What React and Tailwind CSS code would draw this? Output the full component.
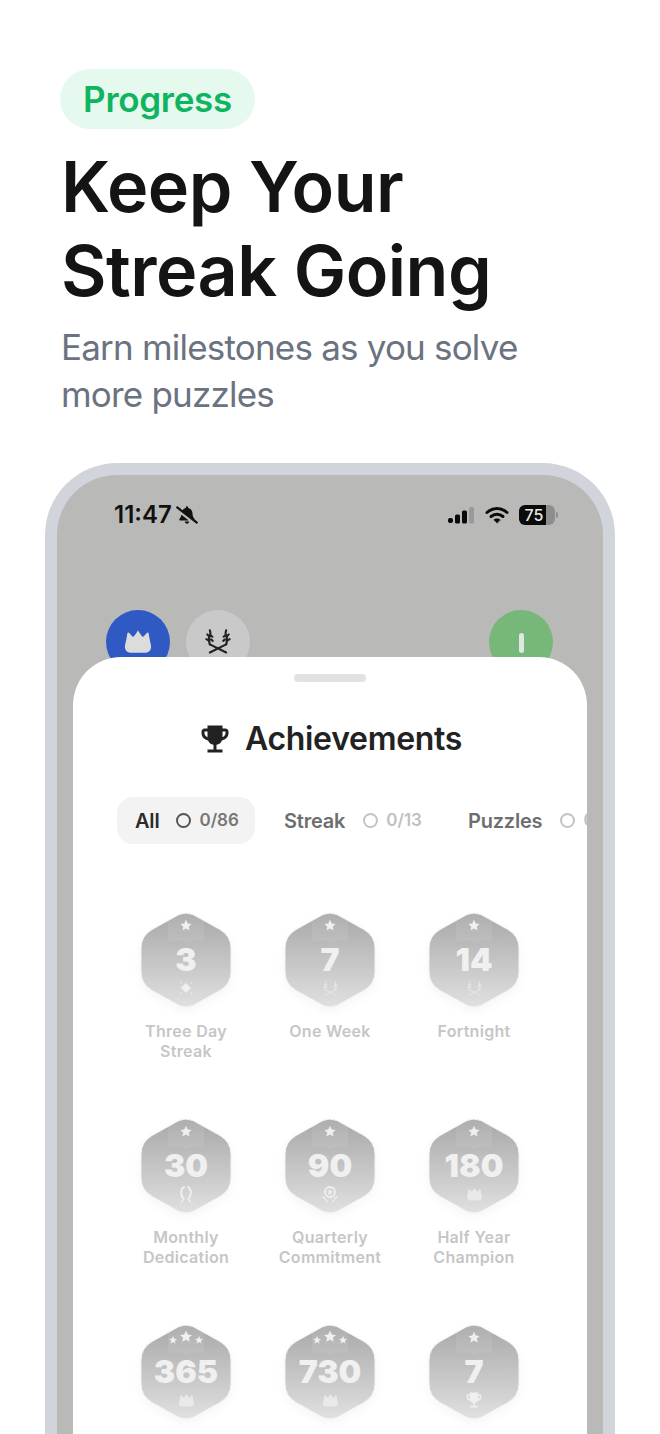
import React from 'react';
import { FaBellSlash } from 'react-icons/fa';
import { MdEmojiEvents } from 'react-icons/md';

const STAR = 'M0-5.2 1.6-1.8 5.2-1.4 2.5 1 3.3 4.6 0 2.8-3.3 4.6-2.5 1-5.2-1.4-1.6-1.8Z';

const Crown = ({ className, fill = '#e9e9e9' }) => (
  <svg viewBox="0 0 28 24" className={className} fill={fill}>
    <path d="M14 1c1.2 2.4 3 5 4.6 6.4 1.2-1 2.4-2.3 3.4-3.6.9-.9 1.8-.7 2 .5.5 3.4 1.200 7 2 10 .9 4-1 7.700-5 7.700H7c-4 0-5.900-3.700-5-7.700.8-3 1.500-6.600 2-10 .2-1.200 1.100-1.400 2-.5 1 1.300 2.200 2.600 3.400 3.600C11 6 12.800 3.400 14 1Z" />
  </svg>
);

const Laurel = ({ className, color = '#efefef', sw = 1.4 }) => (
  <svg viewBox="0 0 24 24" className={className} fill="none" stroke={color} strokeWidth={sw} strokeLinecap="round">
    <path d="M5 21 19 14M19 21 5 14" />
    <path d="M5 14C4 11 4 8 5.500 5M19 14c1-3 1-6-.5-9" />
    <path d="M4.500 11 2 9.500M4.600 7.500 2.800 5.500M5.500 4 5 2M19.500 11 22 9.500M19.400 7.500l1.800-2M18.500 4 19 2M7.500 11 6 9.800M7.200 7.500 6 6.500M16.500 11 18 9.800M16.800 7.500 18 6.500" />
  </svg>
);

const Sparkle = () => (
  <svg viewBox="0 0 20 20" className="h-5 w-5" fill="#efefef" stroke="#efefef" strokeLinecap="round">
    <path d="M10 5.500 14.500 10 10 14.500 5.500 10Z" strokeWidth="1" strokeLinejoin="round" />
    <path d="M4 4 5.500 5.500M16 4 14.500 5.500M4 16 5.500 14.500M16 16 14.500 14.500" strokeWidth="1" />
  </svg>
);

const Wreath = () => (
  <svg viewBox="0 0 20 20" className="h-5 w-5" fill="none" stroke="#efefef" strokeWidth="2" strokeLinecap="round">
    <path d="M8 3C4.500 5 4 11 7.500 15M12 3c3.500 2 4 8 .5 12" />
    <path d="M7 16.500 5.500 18M13 16.500l1.500 1.500" strokeWidth="1.500" />
  </svg>
);

const Rosette = () => (
  <svg viewBox="0 0 20 20" className="h-5 w-5" fill="none" stroke="#efefef" strokeLinecap="round">
    <circle cx="10" cy="8" r="5" strokeWidth="1.800" />
    <path d="M10 5.500 10.800 7.200 12.500 7.500 11.200 8.700 11.600 10.500 10 9.500 8.400 10.500 8.800 8.700 7.500 7.500 9.200 7.200Z" fill="#efefef" strokeWidth=".4" />
    <path d="M3 13 5.500 15M17 13 14.500 15M6 17.500 7 16.500M14 17.500 13 16.500" strokeWidth="1.400" />
  </svg>
);

const icons = {
  sparkle: <Sparkle />,
  laurel: <Laurel className="h-[17px] w-[17px]" sw={1} />,
  wreath: <Wreath />,
  rosette: <Rosette />,
  crown: <Crown className="h-[15px] w-[17px]" />,
  trophy: <MdEmojiEvents className="h-5 w-5 text-[#efefef]" />,
};

const badges = [
  { value: '3', label: 'Three Day Streak', icon: 'sparkle' },
  { value: '7', label: 'One Week', icon: 'laurel' },
  { value: '14', label: 'Fortnight', icon: 'laurel' },
  { value: '30', label: 'Monthly Dedication', icon: 'wreath' },
  { value: '90', label: 'Quarterly Commitment', icon: 'rosette' },
  { value: '180', label: 'Half Year Champion', icon: 'crown' },
  { value: '365', icon: 'crown', stars: 3 },
  { value: '730', icon: 'crown', stars: 3 },
  { value: '7', icon: 'trophy' },
];

const Badge = ({ value, label, icon, stars = 1 }) => (
  <div className="flex flex-col items-center">
    <div className="relative h-[94px] w-[90px]">
      <svg viewBox="0 0 90 94" className="absolute inset-0 h-full w-full overflow-visible drop-shadow-[0_4px_5px_rgba(0,0,0,0.035)]">
        <defs>
          <linearGradient id="hexFill" x1="0" y1="0" x2="0" y2="1">
            <stop offset="0" stopColor="#a8a8a8" />
            <stop offset="1" stopColor="#e0e0e0" />
          </linearGradient>
        </defs>
        <path
          d="M38 1.500Q45-1.500 52 1.500L79 16.500Q90 23 90 35V59Q90 71 79 77.500L52 92.500Q45 95.500 38 92.500L11 77.500Q0 71 0 59V35Q0 23 11 16.500Z"
          fill="url(#hexFill)"
          stroke="#f4f4f4"
          strokeWidth="1"
        />
        <path d="M27 8 38 1.500Q45-1.500 52 1.500L63 8V24Q63 29 58 28 50 26 45 30 40 26 32 28 27 29 27 24Z" fill="#fff" opacity="0.08" />
        {stars === 3 ? (
          <g fill="#efefef">
            <path d={STAR} transform="translate(45 11.500) scale(1.150)" />
            <path d={STAR} transform="translate(32 15) scale(.75)" />
            <path d={STAR} transform="translate(58 15) scale(.75)" />
          </g>
        ) : (
          <path d={STAR} fill="#efefef" transform="translate(45 12.500) scale(1.100)" />
        )}
      </svg>
      <div className="absolute inset-x-0 top-[28px] flex flex-col items-center">
        <span className="text-[32px] leading-[38px] font-black text-[#f0f0f0]">{value}</span>
        <div className="-mt-[1px] flex h-[20px] items-center justify-center">{icons[icon]}</div>
      </div>
    </div>
    {label && (
      <p className="mt-[14px] w-[125px] text-center text-[16px] leading-[20px] font-semibold tracking-[0.3px] text-[#c6c6c6]">{label}</p>
    )}
  </div>
);

const Tab = ({ name, count, active }) => (
  <div className={`flex h-[47px] shrink-0 items-center rounded-[16px] ${active ? 'w-[138px] bg-[#f3f3f3] pl-[18px]' : 'pl-[29px]'}`}>
    <span className={`text-[20px] font-semibold tracking-[-0.2px] ${active ? 'text-[#2b2b2b]' : 'text-[#6e6e6e]'}`}>{name}</span>
    <span className={`h-[15px] w-[15px] shrink-0 rounded-full border-2 ${active ? 'ml-[17px] border-[#555555]' : 'ml-[18px] border-[#c4c4c4]'}`} />
    <span className={`ml-[8px] text-[17px] font-semibold ${active ? 'text-[#777777]' : 'text-[#c0c0c0]'}`}>{count}</span>
  </div>
);

export default function App() {
  return (
    <div className="h-[1434px] w-[660px] overflow-hidden bg-white font-['Inter',sans-serif]">
      <header className="pl-[61px] pt-[69px]">
        <div className="-ml-[1px] flex h-[60px] w-[195px] items-center justify-center rounded-full bg-[#e6f9ef] text-[35px] font-semibold tracking-[-0.3px] text-[#0fb45e]">
          Progress
        </div>
        <h1 className="mt-[16px] text-[70px] leading-[84px] font-semibold tracking-[-0.5px] text-[#141414]">
          Keep Your
          <br />
          Streak Going
        </h1>
        <p className="mt-[11px] text-[35px] leading-[47px] tracking-[-0.8px] text-[#6b7280]">
          Earn milestones as you solve
          <br />
          more puzzles
        </p>
      </header>

      <section className="mx-[45px] mt-[45px] h-[990px] rounded-t-[72px] border-x-[12px] border-t-[12px] border-[#d1d5db] bg-[#b9b9b8] px-[16px]">
        <div className="flex h-[80px] items-center justify-between pl-[41px] pr-[29px]">
          <div className="flex items-center gap-[4px]">
            <span className="text-[24px] font-semibold text-[#111111]">11:47</span>
            <FaBellSlash className="h-[20px] w-[22px] text-[#111111]" />
          </div>
          <div className="flex items-center gap-[10px]">
            <svg viewBox="0 0 28 18" className="h-[18px] w-[28px]">
              <rect x="1" y="12" width="5" height="5" rx="2" fill="#0a0a0a" />
              <rect x="8" y="8.500" width="5" height="9" rx="1.500" fill="#0a0a0a" />
              <rect x="15" y="4.500" width="5" height="13" rx="1.500" fill="#0a0a0a" />
              <rect x="22" y="1" width="5" height="16.500" rx="1.500" fill="#9a9a9a" />
            </svg>
            <svg viewBox="0 0 24 18" className="h-[18px] w-[24px]" fill="none" stroke="#0a0a0a" strokeWidth="3" strokeLinecap="round">
              <path d="M2 6.500C8 1 16 1 22 6.500" />
              <path d="M6 10.500C9.500 7.500 14.500 7.500 18 10.500" />
              <path d="M12 17 8.800 13.800C10.500 12.300 13.500 12.300 15.200 13.800Z" fill="#0a0a0a" strokeWidth="0.500" />
            </svg>
            <div className="flex items-center">
              <div className="flex h-[20px] w-[36px] items-center justify-center overflow-hidden rounded-[6px] bg-[linear-gradient(90deg,#0a0a0a_74%,#8e8e8e_74%)] pr-[6px] text-[16px] font-medium text-[#e8e8e8]">
                75
              </div>
              <span className="ml-[1px] h-[6px] w-[2px] rounded-r-full bg-[#8e8e8e]" />
            </div>
          </div>
        </div>

        <div className="flex h-[102px] items-start justify-between pl-[33px] pr-[34px] pt-[55px]">
          <div className="flex gap-[16px]">
            <div className="flex h-[64px] w-[64px] items-center justify-center rounded-full bg-[#2f5ac4]">
              <Crown className="h-[26px] w-[30px]" fill="#dcdcdc" />
            </div>
            <div className="flex h-[64px] w-[64px] items-center justify-center rounded-full bg-[#c9c9c9]">
              <Laurel className="h-[28px] w-[28px]" color="#222222" sw={1.800} />
            </div>
          </div>
          <div className="flex h-[64px] w-[64px] justify-center rounded-full bg-[#77b87a] pt-[23px]">
            <span className="h-[20px] w-[5px] rounded-full bg-[#dfe9df]" />
          </div>
        </div>

        <div className="relative h-[900px] overflow-hidden rounded-t-[48px] bg-white">
          <div className="mx-auto mt-[17px] h-[8px] w-[72px] rounded-full bg-[#e2e2e2]" />
          <div className="mt-[38px] flex items-center justify-center pr-[1px]">
            <MdEmojiEvents className="mr-[12px] h-[36px] w-[36px] text-[#222222]" />
            <h2 className="text-[32px] leading-[38px] font-semibold tracking-[-0.3px] text-[#222222]">Achievements</h2>
          </div>
          <div className="mt-[39px] flex w-[700px] pl-[44px]">
            <Tab name="All" count="0/86" active />
            <Tab name="Streak" count="0/13" />
            <div className="pl-[17px]">
              <Tab name="Puzzles" count="0/40" />
            </div>
          </div>
          <div className="mt-[69px] grid grid-cols-[144px_144px_144px] auto-rows-[206px] pl-[41px]">
            {badges.map((b, i) => (
              <Badge key={i} {...b} />
            ))}
          </div>
        </div>
      </section>
    </div>
  );
}
